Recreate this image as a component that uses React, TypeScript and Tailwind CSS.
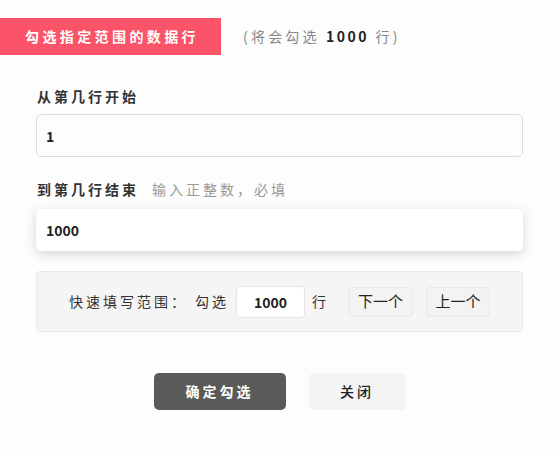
import { useState } from "react";

const font = { fontFamily: '"Noto Sans CJK SC", "Noto Sans", sans-serif' };

export default function App() {
  const [start, setStart] = useState("1");
  const [end, setEnd] = useState("1000");
  const [step, setStep] = useState("1000");

  return (
    <div className="w-[559px] h-[450px] bg-[#fcfdfc] text-[#333]" style={font}>
      {/* 标题栏 */}
      <div className="flex items-center pt-[18px]">
        <div className="w-[221px] h-[37px] bg-[#fb5468] text-white text-[14px] font-bold tracking-[3.4px] flex items-center pl-[25px]">
          勾选指定范围的数据行
        </div>
        <div className="ml-[22px] text-[14px] text-[#888] tracking-[3.2px]">
          (将会勾选 <span className="font-bold text-[#222] tracking-[2.5px]">1000</span> 行)
        </div>
      </div>

      <div className="px-[36px]">
        <div className="mt-[31px] text-[14px] font-bold tracking-[3px] pl-px leading-[20px]">从第几行开始</div>
        <input
          value={start}
          onChange={(e) => setStart(e.target.value)}
          className="mt-[8px] w-full h-[43px] rounded-[5px] border border-[#dddddd] bg-[#fcfdfc] px-[9px] text-[14px] font-bold text-[#222] outline-none"
        />

        <div className="mt-[22px] flex items-baseline leading-[20px] pl-px">
          <span className="text-[14px] font-bold tracking-[3px]">到第几行结束</span>
          <span className="ml-[13px] text-[14px] text-[#999] tracking-[3px]">输入正整数，必填</span>
        </div>
        <input
          value={end}
          onChange={(e) => setEnd(e.target.value)}
          autoFocus
          className="mt-[10px] w-full h-[42px] rounded-[5px] bg-white px-[10px] text-[14px] font-bold text-[#222] outline-none shadow-[0_3px_12px_rgba(0,0,0,0.16)]"
        />

        <div className="mt-[20px] h-[61px] rounded-[4px] border border-[#e8e8e8] bg-[#f5f5f5] flex items-center justify-center gap-[7px] text-[14px]">
          <span className="tracking-[3px]">快速填写范围：</span>
          <span className="tracking-[3px]">勾选</span>
          <input
            value={step}
            onChange={(e) => setStep(e.target.value)}
            className="w-[69px] h-[32px] rounded-[4px] border border-[#e5e5e5] bg-white text-center text-[14px] font-bold text-[#222] outline-none"
          />
          <span className="mr-[15px]">行</span>
          <button className="w-[65px] h-[30px] rounded-[4px] border border-[#e8e8e8] bg-[#f3f3f3] text-[15px] text-[#222]">下一个</button>
          <button className="ml-[6px] w-[64px] h-[30px] rounded-[4px] border border-[#e8e8e8] bg-[#f3f3f3] text-[15px] text-[#222]">上一个</button>
        </div>

        <div className="mt-[41px] flex justify-center gap-[23px]">
          <button className="w-[132px] h-[37px] rounded-[5px] bg-[#5a5b58] text-white text-[14px] font-bold tracking-[3px]">确定勾选</button>
          <button className="w-[97px] h-[37px] rounded-[5px] bg-[#f4f4f4] text-[#222] text-[14px] font-medium tracking-[3px]">关闭</button>
        </div>
      </div>
    </div>
  );
}
